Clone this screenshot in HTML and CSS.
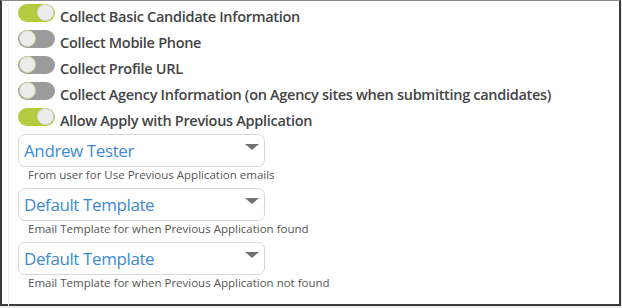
FILE: index.html
```html
<!DOCTYPE html>
<html lang="en">
<head>
  <meta charset="UTF-8" />
  <title>Apply Settings</title>
  <link rel="stylesheet" href="styles.css">
</head>
<body>
  <div class="panel">
    <div class="inner">
      <div class="toggle-row">
        <span class="switch on"><span class="knob"></span></span>
        <span class="label">Collect Basic Candidate Information</span>
      </div>
      <div class="toggle-row">
        <span class="switch"><span class="knob"></span></span>
        <span class="label">Collect Mobile Phone</span>
      </div>
      <div class="toggle-row">
        <span class="switch"><span class="knob"></span></span>
        <span class="label">Collect Profile URL</span>
      </div>
      <div class="toggle-row">
        <span class="switch"><span class="knob"></span></span>
        <span class="label">Collect Agency Information (on Agency sites when submitting candidates)</span>
      </div>
      <div class="toggle-row">
        <span class="switch on"><span class="knob"></span></span>
        <span class="label">Allow Apply with Previous Application</span>
      </div>

      <div class="fields">
        <div class="field">
          <div class="select">
            <span class="value">Andrew Tester</span>
            <span class="arrow"></span>
          </div>
          <div class="hint">From user for Use Previous Application emails</div>
        </div>
        <div class="field">
          <div class="select">
            <span class="value">Default Template</span>
            <span class="arrow"></span>
          </div>
          <div class="hint">Email Template for when Previous Application found</div>
        </div>
        <div class="field">
          <div class="select">
            <span class="value">Default Template</span>
            <span class="arrow"></span>
          </div>
          <div class="hint">Email Template for when Previous Application not found</div>
        </div>
      </div>
    </div>
  </div>
</body>
</html>
```

FILE: styles.css
```css
body {
  margin: 0;
  background-color: #ebebeb;
  font-family: 'Open Sans', sans-serif;
  color: #444;
}
.panel {
  box-sizing: border-box;
  width: 621px;
  height: 306px;
  background: #ffffff;
  border: 2px solid #3a3a3a;
  border-top: 1px solid #8a8a8a;
  padding-left: 6px;
}
.inner {
  height: 100%;
  border-left: 1px solid #efefef;
  padding: 2px 0 0 9px;
}
.toggle-row {
  display: flex;
  align-items: center;
  gap: 5px;
  height: 26px;
}
.switch {
  box-sizing: border-box;
  width: 37px;
  height: 18px;
  border-radius: 9px;
  background: #9b9b9b;
  display: flex;
  align-items: center;
  padding: 0 1px;
  margin-top: -7px;
}
.switch.on {
  background: #b3cb3f;
  justify-content: flex-end;
}
.knob {
  box-sizing: border-box;
  width: 17px;
  height: 17px;
  border-radius: 50%;
  background: #ececec;
  border: 1px solid #c9d98a;
}
.switch.on .knob {
  border-color: #d5d5d5;
}
.label {
  font-size: 14.5px;
  font-weight: 600;
  letter-spacing: -0.3px;
  color: #444;
}
.fields {
  display: flex;
  flex-direction: column;
  gap: 5px;
  margin-top: 1px;
}
.select {
  box-sizing: border-box;
  width: 247px;
  height: 33px;
  border: 1px solid #d9d9d9;
  border-radius: 7px;
  display: flex;
  align-items: center;
  justify-content: space-between;
  padding: 0 5px 0 5px;
}
.value {
  font-size: 17px;
  letter-spacing: -0.4px;
  color: #3d8ad6;
}
.arrow {
  width: 0;
  height: 0;
  border-left: 7px solid transparent;
  border-right: 7px solid transparent;
  border-top: 6px solid #707070;
  align-self: flex-start;
  margin-top: 9px;
}
.hint {
  font-size: 11.5px;
  color: #555;
  padding-left: 10px;
  height: 16px;
  line-height: 16px;
}
```
